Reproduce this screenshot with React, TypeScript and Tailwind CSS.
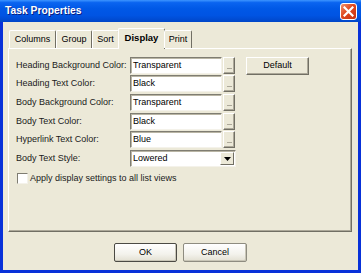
import React from "react";

const font = { fontFamily: '"Liberation Sans", Arial, sans-serif' };

function Field({ value }: { value: string }) {
  return (
    <div className="flex items-center">
      <div className="w-[92px] h-[17px] bg-white border border-t-[#7f7d72] border-l-[#7f7d72] border-b-[#f4f2ea] border-r-[#f4f2ea] shadow-[inset_1px_1px_0_#b9b5a4] pl-[2px] text-[9px] leading-[15px] text-black">
        {value}
      </div>
      <div className="ml-[1px] w-[12px] h-[17px] bg-[#ece9d8] border border-t-white border-l-white border-b-[#716f64] border-r-[#716f64] shadow-[inset_-1px_-1px_0_#aca899] flex items-end justify-center pb-[4px]">
        <div className="w-[5px] h-[1px] bg-[#aca899]" />
      </div>
    </div>
  );
}

function Row({ label, children, mt }: { label: string; children: React.ReactNode; mt: string }) {
  return (
    <div className={`flex items-center ${mt}`}>
      <div className="w-[114px] whitespace-nowrap text-[9px] leading-[17px] text-[#1a1a1a]">{label}</div>
      {children}
    </div>
  );
}

function Button({ label, w, focused }: { label: string; w: string; focused?: boolean }) {
  return (
    <div
      className={`${w} h-[19px] flex items-center justify-center text-[9px] text-black rounded-[2px] bg-[linear-gradient(to_bottom,#ffffff,#f3f2ec_60%,#e3e0d2)] border ${
        focused ? "border-[#4b4a44]" : "border-[#8e8c80]"
      } shadow-[inset_-1px_-1px_0_#c9c6b7]`}
    >
      {label}
    </div>
  );
}

export default function App() {
  const tabs = ["Columns", "Group", "Sort", "Display", "Print"];
  const widths = ["w-[47px]", "w-[36px]", "w-[27px]", "w-[45px]", "w-[28px]"];
  return (
    <div style={font} className="w-[361px] h-[273px] bg-[#0831d9] flex flex-col overflow-hidden">
      {/* Title bar */}
      <div className="h-[22px] flex items-center justify-between bg-[linear-gradient(to_bottom,#3d95ff_0%,#0a64f0_12%,#0058e6_40%,#0054e3_70%,#0046c8_100%)] pl-[5px] pr-[4px]">
        <span className="text-white font-bold text-[10.3px] [text-shadow:1px_1px_0_#0a1e80]">Task Properties</span>
        <div className="w-[17px] h-[17px] rounded-[3px] border border-white bg-[linear-gradient(135deg,#f0936f,#e0481f_45%,#c43212)] flex items-center justify-center mt-[1px]">
          <svg width="11" height="11" viewBox="0 0 11 11">
            <path d="M1.5 1.5 L9.5 9.5 M9.5 1.5 L1.5 9.5" stroke="white" strokeWidth="2.2" strokeLinecap="square" />
          </svg>
        </div>
      </div>
      {/* Body */}
      <div className="flex-1 mx-[3px] mb-[3px] bg-[#ece9d8] flex flex-col">
        {/* Tabs */}
        <div className="flex items-end h-[26px] pl-[6px] relative z-10">
          {tabs.map((t, i) => {
            const sel = t === "Display";
            return (
              <div
                key={t}
                className={`${widths[i]} flex items-center justify-center text-black bg-[#ece9d8] border-t border-l border-t-white border-l-white border-r border-r-[#716f64] rounded-tl-[2px] rounded-tr-[2px] ${
                  sel ? "h-[21px] font-bold text-[9.5px] mb-[-1px] pb-[2px] -ml-[1px] -mr-[1px] w-[47px]" : "h-[18px] pt-[1px] text-[9px]"
                }`}
              >
                {t}
              </div>
            );
          })}
        </div>
        {/* Panel */}
        <div className="mx-[5px] mr-[6px] h-[184px] border border-t-white border-l-white border-r-[#716f64] border-b-[#716f64] shadow-[inset_-1px_-1px_0_#aca899] pl-[7px] pt-[8px] relative">
          <div className="flex">
            <div className="flex flex-col">
              <Row label="Heading Background Color:" mt="mt-0">
                <Field value="Transparent" />
              </Row>
              <Row label="Heading Text Color:" mt="mt-[1px]">
                <Field value="Black" />
              </Row>
              <Row label="Body Background Color:" mt="mt-[2px]">
                <Field value="Transparent" />
              </Row>
              <Row label="Body Text Color:" mt="mt-[2px]">
                <Field value="Black" />
              </Row>
              <Row label="Hyperlink Text Color:" mt="mt-[1px]">
                <Field value="Blue" />
              </Row>
              <Row label="Body Text Style:" mt="mt-[2px]">
                <div className="w-[106px] h-[17px] bg-white border border-t-[#7f7d72] border-l-[#7f7d72] border-b-[#f4f2ea] border-r-[#f4f2ea] shadow-[inset_1px_1px_0_#b9b5a4] flex items-center">
                  <div className="flex-1 pl-[2px] text-[9px] leading-[15px]">Lowered</div>
                  <div className="w-[14px] h-[13px] mr-[1px] bg-[#ece9d8] border border-t-white border-l-white border-b-[#716f64] border-r-[#716f64] flex items-center justify-center">
                    <svg width="7" height="4" viewBox="0 0 7 4">
                      <path d="M0 0 H7 L3.5 4 Z" fill="black" />
                    </svg>
                  </div>
                </div>
              </Row>
            </div>
            <div className="ml-[10px]">
              <div className="w-[63px] h-[18px] flex items-center justify-center text-[9px] bg-[#ece9d8] border border-t-white border-l-white border-b-[#716f64] border-r-[#716f64] shadow-[inset_-1px_-1px_0_#aca899]">
                Default
              </div>
            </div>
          </div>
          <div className="flex items-center mt-[5px] ml-[1px]">
            <div className="w-[11px] h-[11px] bg-white border border-t-[#7f7d72] border-l-[#7f7d72] border-b-[#f4f2ea] border-r-[#f4f2ea]" />
            <span className="ml-[2px] text-[9px] text-[#1a1a1a]">Apply display settings to all list views</span>
          </div>
        </div>
        {/* Buttons */}
        <div className="flex justify-center gap-[6px] mt-[11px]">
          <Button label="OK" w="w-[63px]" focused />
          <Button label="Cancel" w="w-[64px]" />
        </div>
      </div>
    </div>
  );
}
